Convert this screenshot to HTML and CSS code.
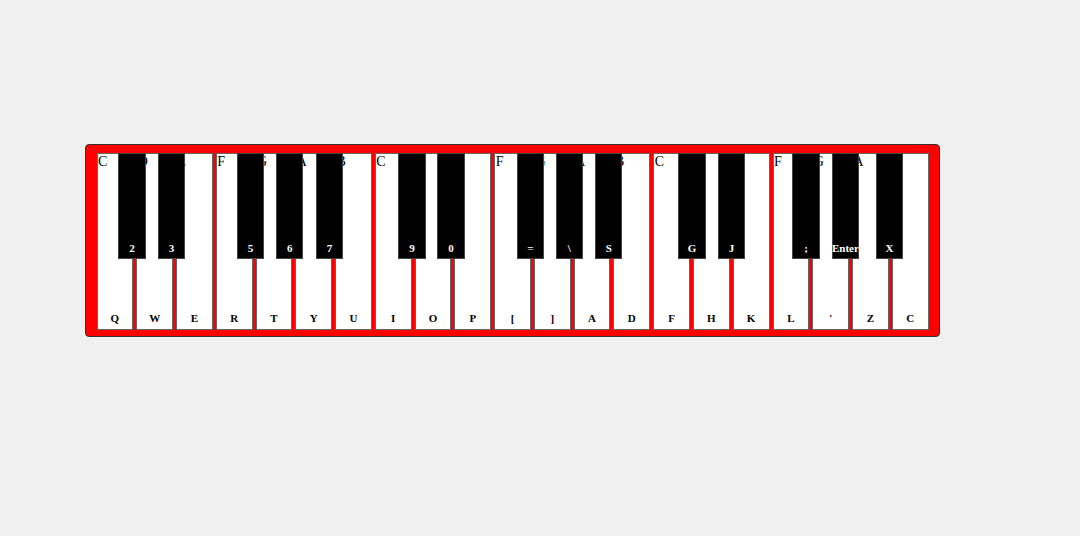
FILE: index.html
```html
<!DOCTYPE html>
<html>
<head>
<meta charset="utf-8">
<title>Piano</title>
<link rel="stylesheet" href="styles.css">
</head>
<body>
<div class="piano">
  <div class="keys">
    <div class="white"><span class="note">C</span><span class="kb">Q</span></div>
    <div class="white"><span class="note">D</span><span class="kb">W</span></div>
    <div class="white"><span class="note">E</span><span class="kb">E</span></div>
    <div class="white"><span class="note">F</span><span class="kb">R</span></div>
    <div class="white"><span class="note">G</span><span class="kb">T</span></div>
    <div class="white"><span class="note">A</span><span class="kb">Y</span></div>
    <div class="white"><span class="note">B</span><span class="kb">U</span></div>
    <div class="white"><span class="note">C</span><span class="kb">I</span></div>
    <div class="white"><span class="note">D</span><span class="kb">O</span></div>
    <div class="white"><span class="note">E</span><span class="kb">P</span></div>
    <div class="white"><span class="note">F</span><span class="kb">[</span></div>
    <div class="white"><span class="note">G</span><span class="kb">]</span></div>
    <div class="white"><span class="note">A</span><span class="kb">A</span></div>
    <div class="white"><span class="note">B</span><span class="kb">D</span></div>
    <div class="white"><span class="note">C</span><span class="kb">F</span></div>
    <div class="white"><span class="note">D</span><span class="kb">H</span></div>
    <div class="white"><span class="note">E</span><span class="kb">K</span></div>
    <div class="white"><span class="note">F</span><span class="kb">L</span></div>
    <div class="white"><span class="note">G</span><span class="kb">'</span></div>
    <div class="white"><span class="note">A</span><span class="kb">Z</span></div>
    <div class="white"><span class="note">B</span><span class="kb">C</span></div>

    <div class="black" style="left:21.8px">2</div>
    <div class="black" style="left:61.2px">3</div>
    <div class="black" style="left:140.2px">5</div>
    <div class="black" style="left:179.5px">6</div>
    <div class="black" style="left:219.2px">7</div>
    <div class="black" style="left:301.8px">9</div>
    <div class="black" style="left:340.8px">0</div>
    <div class="black" style="left:420.2px">=</div>
    <div class="black" style="left:459.2px">\</div>
    <div class="black" style="left:498.5px">S</div>
    <div class="black" style="left:581.8px">G</div>
    <div class="black" style="left:621.2px">J</div>
    <div class="black" style="left:695.8px">;</div>
    <div class="black" style="left:735.2px">Enter</div>
    <div class="black" style="left:779.2px">X</div>
  </div>
</div>
</body>
</html>
```

FILE: styles.css
```css
html, body {
  margin: 0;
  padding: 0;
  background: #f0f0f0;
}

body {
  font-family: "Liberation Serif", "Times New Roman", serif;
  width: 1080px;
  height: 536px;
  overflow: hidden;
}

.piano {
  box-sizing: content-box;
  width: 832px;
  margin: 144px 0 0 85px;
  padding: 8px 10px 6px 10.5px;
  border: 1px solid #333;
  border-radius: 4px;
  background: #ff0000;
}

.keys {
  position: relative;
  display: flex;
  gap: 3px;
  height: 176.5px;
}

.white {
  flex: 1 1 0;
  min-width: 0;
  box-sizing: border-box;
  background: #ffffff;
  border: 1px solid #666;
  display: flex;
  flex-direction: column;
  justify-content: space-between;
  color: #000;
}

.note {
  font-size: 14px;
  line-height: 16px;
  padding-left: 0.5px;
  white-space: nowrap;
}

.kb {
  font-size: 11px;
  font-weight: bold;
  line-height: 13px;
  text-align: center;
  padding-bottom: 4px;
}

.black {
  position: absolute;
  top: 0;
  width: 27.4px;
  height: 106px;
  box-sizing: border-box;
  background: #000;
  border: 1px solid #444;
  color: #fff;
  font-size: 11px;
  font-weight: bold;
  line-height: 13px;
  display: flex;
  align-items: flex-end;
  justify-content: center;
  padding-bottom: 3px;
  white-space: nowrap;
}
```
